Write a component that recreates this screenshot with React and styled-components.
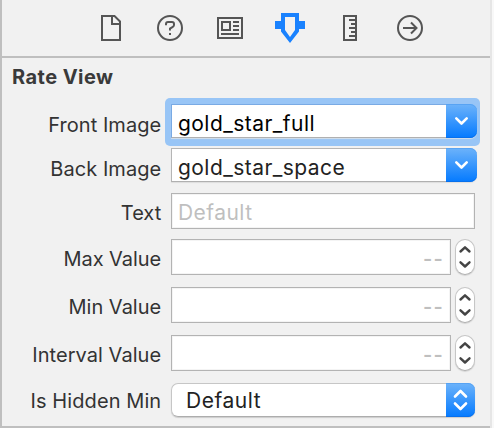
import React from "react";
import styled, { createGlobalStyle } from "styled-components";

const Global = createGlobalStyle`
  * { box-sizing: border-box; }
  body { margin: 0; background: #f8f8f8; font-family: Inter, "Liberation Sans", sans-serif; }
`;

const Frame = styled.div`
  width: 492px;
  height: 428px;
  border-right: 2px solid #e6e6e6;
`;

const Panel = styled.main`
  width: 490px;
  height: 428px;
  background: #f1f1f1;
  border-left: 2px solid #bfbfbf;
  border-bottom: 2px solid #bfbfbf;
`;

const Toolbar = styled.nav`
  display: flex;
  gap: 30px;
  height: 58px;
  padding: 13px 0 0 94px;
  border-bottom: 2px solid #bfbfbf;
`;

const Tab = styled.button`
  width: 30px;
  height: 30px;
  padding: 0;
  border: 0;
  background: none;
  color: ${(p) => (p.$active ? "#1a82fe" : "#555")};
  svg { display: block; overflow: visible; fill: none; stroke: currentColor; stroke-width: 2; }
`;

const Title = styled.h1`
  margin: 6px 0 0 10px;
  height: 26px;
  font-size: 20px;
  line-height: 26px;
  font-weight: 700;
  letter-spacing: 0.45px;
  color: #3a3a3a;
  white-space: nowrap;
`;

const Form = styled.div`
  display: flex;
  flex-direction: column;
  padding-top: 14px;
`;

const Row = styled.div`
  display: flex;
  align-items: flex-start;
  height: ${(p) => p.$height}px;
`;

const Label = styled.label`
  width: 160px;
  margin-right: 9px;
  padding-top: ${(p) => p.$drop}px;
  padding-right: 0.8px;
  display: flex;
  justify-content: flex-end;
  font-size: 20px;
  line-height: 24px;
  letter-spacing: ${(p) => p.$track || 0}px;
  color: #333;
  white-space: nowrap;
`;

const FocusRing = styled.div`
  margin: -6px 0 0 -6px;
  padding: 6px 3px 8px 6px;
  border-radius: 5px;
  background: #98c5f6;
`;

const Combo = styled.div`
  display: flex;
  width: 306px;
  height: 34px;
  border-radius: 0 7px 7px 0;
  box-shadow: 0 1px 1px ${(p) => (p.$focused ? "#d5dfea" : "#ddd")};
`;

const ComboText = styled.div`
  flex: 1;
  height: 34px;
  padding: 7px 0 0 6px;
  background: #fff;
  border: 1px solid ${(p) => (p.$focused ? "#79aae4" : "#b5b5b5")};
  border-bottom-color: #b0b0b0;
  border-right: 0;
  font-size: 21px;
  line-height: 24px;
  letter-spacing: 0.45px;
  color: ${(p) => (p.$focused ? "#000" : "#222")};
  white-space: nowrap;
`;

const BlueCap = styled.div`
  width: ${(p) => p.$width}px;
  height: 34px;
  border-radius: 0 7px 7px 0;
  background: linear-gradient(#6db3fa, #047aff);
  box-shadow: inset 0 1px #57a3f3, inset 0 -1px #0870ec;
  svg { display: block; fill: none; stroke: #fff; stroke-width: 2.6; stroke-linecap: round; stroke-linejoin: round; }
`;

const Field = styled.div`
  width: ${(p) => p.$width}px;
  height: 36px;
  padding: ${(p) => (p.$numeric ? "7px 6px 0 0" : "7px 0 0 6px")};
  text-align: ${(p) => (p.$numeric ? "right" : "left")};
  background: #fff;
  border: 1px solid #b3b3b3;
  box-shadow: inset 0 0 0 1px #f4f4f4;
  color: #bfbfbf;
  font-size: 21px;
  line-height: 24px;
  letter-spacing: 0.45px;
`;

const Dashes = styled.span`
  display: inline-block;
  font-size: 20px;
  font-weight: 600;
  letter-spacing: 1.2px;
`;

const Stepper = styled.div`
  width: 20px;
  height: 36px;
  margin-left: 4px;
  border: 1px solid #c6c6c6;
  border-bottom-color: #b0b0b0;
  border-radius: 10px;
  background: #fff;
  box-shadow: 0 1px 1px #d4d4d4;
  svg { display: block; fill: none; stroke: #444; stroke-width: 2.4; stroke-linecap: round; stroke-linejoin: round; }
`;

const Popup = styled.div`
  display: flex;
  width: 304px;
  height: 34px;
  border-radius: 7px;
  box-shadow: 0 1px 1px #ccc;
`;

const PopupText = styled.div`
  flex: 1;
  padding: 5px 0 0 14px;
  border: 1px solid #c6c6c6;
  border-right: 0;
  border-bottom-color: #adadad;
  border-radius: 7px 0 0 7px;
  background: #fff;
  color: #222;
  font-size: 21px;
  line-height: 24px;
  letter-spacing: 0.55px;
`;

const Icon = ({ children }) => (
  <svg width="30" height="30" viewBox="0 0 30 30">{children}</svg>
);

function ComboBox({ text, focused }) {
  const box = (
    <Combo $focused={focused}>
      <ComboText $focused={focused}>{text}</ComboText>
      <BlueCap $width={31}>
        <svg width="31" height="34" viewBox="0 0 31 34"><path d="M10.3 14.3 15.5 19.5 20.7 14.3" /></svg>
      </BlueCap>
    </Combo>
  );
  return focused ? <FocusRing>{box}</FocusRing> : box;
}

function NumberField() {
  return (
    <>
      <Field $width={280} $numeric><Dashes>--</Dashes></Field>
      <Stepper>
        <svg width="18" height="34" viewBox="0 0 18 34"><path d="M4.5 11.5 9 7.3 13.5 11.5M4.5 22.3 9 26.5 13.5 22.3" /></svg>
      </Stepper>
    </>
  );
}

export default function App() {
  return (
    <>
      <Global />
      <Frame>
        <Panel>
          <Toolbar>
            <Tab aria-label="File"><Icon><path d="M6 3H18.5L24 8.5V27H6ZM16 4V11H23" /></Icon></Tab>
            <Tab aria-label="Help"><Icon><circle cx="14" cy="15" r="12" /><path d="M10 12.2V11Q10 9 12 9H16Q18 9 18 11V12Q18 13.2 16.8 13.8L14 15.6V17.5M14 20V22" /></Icon></Tab>
            <Tab aria-label="Identity"><Icon><path d="M2 5H26V25H2ZM6 9H14V17H6ZM17 9H23M17 13H23M17 17H23M5 21H23" /></Icon></Tab>
            <Tab aria-label="Attributes" $active><Icon><path fill="currentColor" stroke="none" fillRule="evenodd" d="M5 0H23V8H29V16H23V18.5L14 30 5 18.5V16H-1V8H5ZM9 4V17L14 24 19 17V4Z" /></Icon></Tab>
            <Tab aria-label="Size"><Icon><path d="M8 3H20V27H8ZM13 7H19M15 11H19M13 15H19M15 19H19M13 23H19" /></Icon></Tab>
            <Tab aria-label="Connections"><Icon><circle cx="14" cy="15" r="12" /><path d="M7 15H20M15 9.5 20.5 15 15 20.5" /></Icon></Tab>
          </Toolbar>
          <Title>Rate View</Title>
          <Form>
            <Row $height={44}><Label $drop={9} $track={0.05}>Front Image</Label><ComboBox text="gold_star_full" focused /></Row>
            <Row $height={45}><Label $drop={9} $track={0.05}>Back Image</Label><ComboBox text="gold_star_space" /></Row>
            <Row $height={46}><Label $drop={8}>Text</Label><Field $width={304}>Default</Field></Row>
            <Row $height={48}><Label $drop={8} $track={-0.05}>Max Value</Label><NumberField /></Row>
            <Row $height={48}><Label $drop={8}>Min Value</Label><NumberField /></Row>
            <Row $height={48}><Label $drop={8} $track={0.05}>Interval Value</Label><NumberField /></Row>
            <Row $height={34}>
              <Label $drop={6} $track={0.08}>Is Hidden Min</Label>
              <Popup>
                <PopupText>Default</PopupText>
                <BlueCap $width={29}>
                  <svg width="29" height="34" viewBox="0 0 29 34"><path d="M9 13.5 14.5 8 20 13.5M9 20.5 14.5 26 20 20.5" /></svg>
                </BlueCap>
              </Popup>
            </Row>
          </Form>
        </Panel>
      </Frame>
    </>
  );
}
